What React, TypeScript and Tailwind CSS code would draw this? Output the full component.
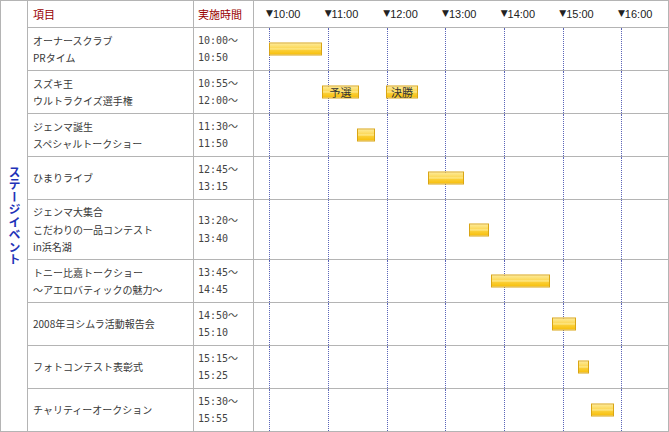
type Bar = { left: number; width: number; label?: string };
type Row = { title: string[]; time: string[]; bars: Bar[]; h: string };

const hours = ['10:00', '11:00', '12:00', '13:00', '14:00', '15:00', '16:00'];
const gridLines = [15, 74, 133, 191, 250, 309, 367];

// 行ごとの高さはクラスで持つ（最後の行は外枠が下線になる）
const rows: Row[] = [
  { title: ['オーナースクラブ', 'PRタイム'], time: ['10:00〜', '10:50'], bars: [{ left: 15, width: 53 }], h: 'h-[43px] border-b' },
  {
    title: ['スズキ王', 'ウルトラクイズ選手権'],
    time: ['10:55〜', '12:00〜'],
    bars: [
      { left: 68, width: 37, label: '予選' },
      { left: 132, width: 32, label: '決勝' },
    ],
    h: 'h-[43px] border-b',
  },
  { title: ['ジェンマ誕生', 'スペシャルトークショー'], time: ['11:30〜', '11:50'], bars: [{ left: 103, width: 18 }], h: 'h-[43px] border-b' },
  { title: ['ひまりライブ'], time: ['12:45〜', '13:15'], bars: [{ left: 174, width: 36 }], h: 'h-[43px] border-b' },
  {
    title: ['ジェンマ大集合', 'こだわりの一品コンテスト', 'in浜名湖'],
    time: ['13:20〜', '13:40'],
    bars: [{ left: 215, width: 20 }],
    h: 'h-[60px] border-b',
  },
  { title: ['トニー比嘉トークショー', '〜アエロバティックの魅力〜'], time: ['13:45〜', '14:45'], bars: [{ left: 237, width: 59 }], h: 'h-[43px] border-b' },
  { title: ['2008年ヨシムラ活動報告会'], time: ['14:50〜', '15:10'], bars: [{ left: 298, width: 24 }], h: 'h-[43px] border-b' },
  { title: ['フォトコンテスト表彰式'], time: ['15:15〜', '15:25'], bars: [{ left: 324, width: 11 }], h: 'h-[43px] border-b' },
  { title: ['チャリティーオークション'], time: ['15:30〜', '15:55'], bars: [{ left: 337, width: 23 }], h: 'h-[42px]' },
];

function TimeBar({ bar }: { bar: Bar }) {
  return (
    <div
      className="absolute top-1/2 h-[13px] -translate-y-1/2 border border-[#d9a514] bg-[linear-gradient(to_bottom,#fdea95_0%,#fcd858_42%,#fff2a6_50%,#fbd03a_58%,#f7bf0c_100%)] flex items-center justify-center text-[11px] leading-[11px] text-[#333]"
      style={{ left: bar.left, width: bar.width }}
    >
      {bar.label}
    </div>
  );
}

export default function App() {
  return (
    <div className="w-[669px] h-[432px] bg-white [font-family:'Noto_Sans_CJK_JP',sans-serif] text-[#383838]">
      <div className="flex h-full w-full border border-[#b4b4b4]">
        <div className="flex w-[27px] shrink-0 items-center justify-center border-r border-[#b4b4b4]">
          <span className="[writing-mode:vertical-rl] text-[12px] font-bold tracking-[0.5px] text-[#1f33b8]">
            ステージイベント
          </span>
        </div>

        <div className="flex flex-1 flex-col">
          {/* 見出し */}
          <div className="flex h-[27px] shrink-0 border-b border-[#b4b4b4]">
            <div className="flex w-[166px] shrink-0 items-center border-r border-[#b4b4b4] pl-[5px] text-[11px] text-[#990000]">
              項目
            </div>
            <div className="flex w-[60px] shrink-0 items-center border-r border-[#b4b4b4] pl-[4px] text-[11px] text-[#990000]">
              実施時間
            </div>
            <div className="flex flex-1 items-center pl-[12px]">
              {hours.map((h) => (
                <div key={h} className="flex w-[58.67px] shrink-0 items-center text-[11px] text-[#222] [font-family:'Liberation_Sans',sans-serif]">
                  <span className="text-[9px] [font-family:'DejaVu_Sans',sans-serif]">▼</span>
                  {h}
                </div>
              ))}
            </div>
          </div>

          {rows.map((row, i) => (
            <div key={i} className={`flex shrink-0 border-[#b4b4b4] ${row.h}`}>
              <div className="flex w-[166px] shrink-0 flex-col justify-center border-r border-[#b4b4b4] pl-[5px] text-[10px] leading-[17.5px]">
                {row.title.map((t) => (
                  <div key={t}>{t}</div>
                ))}
              </div>
              <div className="flex w-[60px] shrink-0 flex-col justify-center border-r border-[#b4b4b4] pl-[4px] text-[10px] leading-[17.5px] text-[#444] [font-family:'DejaVu_Sans_Mono','Noto_Sans_CJK_JP',monospace]">
                {row.time.map((t) => (
                  <div key={t}>{t}</div>
                ))}
              </div>
              <div className="relative flex-1">
                {gridLines.map((x) => (
                  <div
                    key={x}
                    className="absolute inset-y-0 border-l border-dotted border-[#5a64b8]"
                    style={{ left: x }}
                  />
                ))}
                {row.bars.map((b) => (
                  <TimeBar key={b.left} bar={b} />
                ))}
              </div>
            </div>
          ))}
        </div>
      </div>
    </div>
  );
}
